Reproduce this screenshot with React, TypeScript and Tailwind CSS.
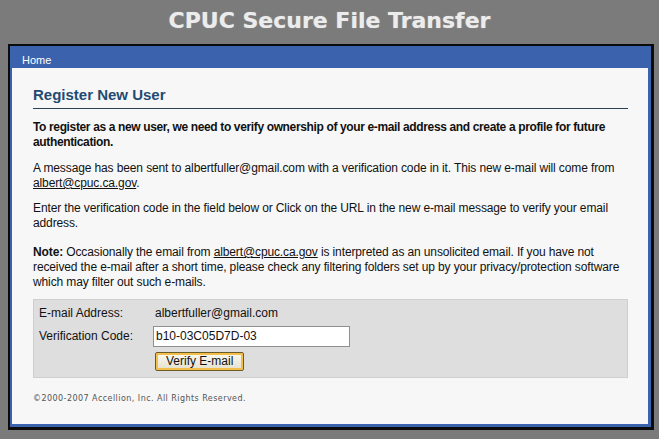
import React from "react";

export default function App() {
  return (
    <div className="w-[659px] h-[439px] bg-[#7b7b7b] overflow-hidden" style={{ fontFamily: '"Liberation Sans", Arial, sans-serif' }}>
      <div className="h-[44px] flex items-center justify-center pb-[2px]">
        <h1 className="text-[22px] font-bold text-[#ececec] leading-none [text-shadow:0_0_1px_#bbbbbb]" style={{ fontFamily: '"DejaVu Sans", Verdana, sans-serif' }}>
          CPUC Secure File Transfer
        </h1>
      </div>
      <div className="ml-[8px] w-[646px] h-[386px] border-2 border-r-[3px] border-b-[3px] border-[#0b0b0b] bg-[#3a62ad] flex flex-col">
        <div className="h-[22px] pl-[12px] pt-[8px] text-[11px] leading-[12px] text-white">Home</div>
        <div className="mx-[2px] mr-[3px] mb-[3px] flex-1 bg-[#f7f7f7] pl-[21px] pr-[20px] pt-[18px] text-[12px] leading-[15px] text-[#111] tracking-[-0.12px]">
          <div className="border-b border-[#2b4050] pb-[4px]">
            <h2 className="text-[15px] leading-[18px] font-bold text-[#1f4b73] tracking-normal">Register New User</h2>
          </div>
          <p className="mt-[11px] font-bold tracking-[-0.36px]">
            To register as a new user, we need to verify ownership of your e-mail address and create a profile for future authentication.
          </p>
          <p className="mt-[11px]">
            A message has been sent to albertfuller@gmail.com with a verification code in it. This new e-mail will come from <span className="underline">albert@cpuc.ca.gov</span>.
          </p>
          <p className="mt-[10px]">
            Enter the verification code in the field below or Click on the URL in the new e-mail message to verify your email address.
          </p>
          <p className="mt-[14px]">
            <span className="font-bold">Note:</span> Occasionally the email from <span className="underline">albert@cpuc.ca.gov</span> is interpreted as an unsolicited email. If you have not received the e-mail after a short time, please check any filtering folders set up by your privacy/protection software which may filter out such e-mails.
          </p>
          <div className="mt-[9px] h-[79px] bg-[#dedede] border border-[#cfcfcf] pl-[5px] pt-[5px] tracking-normal">
            <div className="flex items-center h-[16px]">
              <div className="w-[116px]">E-mail Address:</div>
              <div>albertfuller@gmail.com</div>
            </div>
            <div className="flex items-center mt-[4px] h-[22px]">
              <div className="w-[114px]">Verification Code:</div>
              <div className="w-[197px] h-[21px] bg-white border border-[#8f8f8f] pl-[2px] flex items-center text-[12px]">b10-03C05D7D-03</div>
            </div>
            <div className="mt-[5px] ml-[116px]">
              <button className="h-[19px] px-[10px] text-[12px] leading-[15px] text-[#111] rounded-[2px] border border-[#6b5a2a] bg-gradient-to-b from-[#fbfaf3] to-[#e4e0cc] shadow-[inset_0_0_0_2px_#f2c04a]">
                Verify E-mail
              </button>
            </div>
          </div>
          <div className="mt-[16px] text-[8px] leading-[10px] tracking-[0.45px] text-[#555]" style={{ fontFamily: '"DejaVu Sans", Verdana, sans-serif' }}>
            ©2000-2007 Accellion, Inc. All Rights Reserved.
          </div>
        </div>
      </div>
    </div>
  );
}
